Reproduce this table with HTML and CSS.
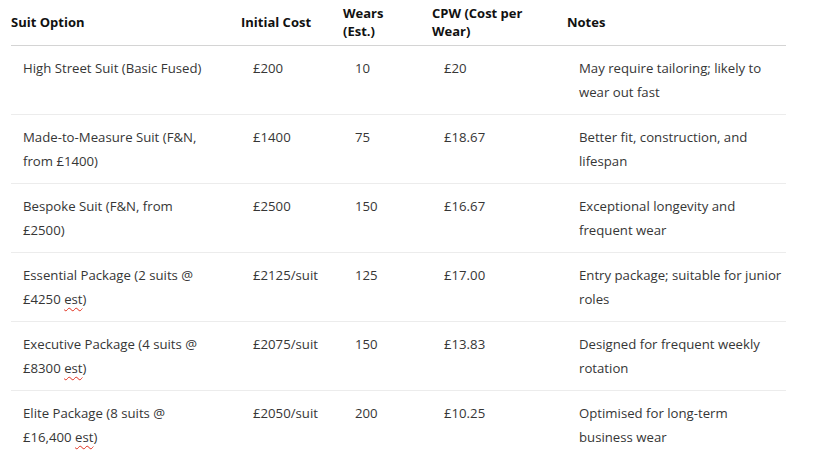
FILE: index.html
```html
<!DOCTYPE html>
<html>
<head>
<meta charset="utf-8">
<link rel="stylesheet" href="styles.css">
</head>
<body>
<table class="suits">
  <colgroup>
    <col class="c1"><col class="c2"><col class="c3"><col class="c4"><col class="c5">
  </colgroup>
  <thead>
    <tr>
      <th>Suit Option</th>
      <th>Initial Cost</th>
      <th>Wears<br>(Est.)</th>
      <th>CPW (Cost per<br>Wear)</th>
      <th>Notes</th>
    </tr>
  </thead>
  <tbody>
    <tr>
      <td>High Street Suit (Basic Fused)</td>
      <td>£200</td>
      <td>10</td>
      <td>£20</td>
      <td>May require tailoring; likely to<br>wear out fast</td>
    </tr>
    <tr>
      <td>Made-to-Measure Suit (F&amp;N,<br>from £1400)</td>
      <td>£1400</td>
      <td>75</td>
      <td>£18.67</td>
      <td>Better fit, construction, and<br>lifespan</td>
    </tr>
    <tr>
      <td>Bespoke Suit (F&amp;N, from<br>£2500)</td>
      <td>£2500</td>
      <td>150</td>
      <td>£16.67</td>
      <td>Exceptional longevity and<br>frequent wear</td>
    </tr>
    <tr>
      <td>Essential Package (2 suits @<br>£4250 <span class="spell">est</span>)</td>
      <td>£2125/suit</td>
      <td>125</td>
      <td>£17.00</td>
      <td>Entry package; suitable for junior<br>roles</td>
    </tr>
    <tr>
      <td>Executive Package (4 suits @<br>£8300 <span class="spell">est</span>)</td>
      <td>£2075/suit</td>
      <td>150</td>
      <td>£13.83</td>
      <td>Designed for frequent weekly<br>rotation</td>
    </tr>
    <tr>
      <td>Elite Package (8 suits @<br>£16,400 <span class="spell">est</span>)</td>
      <td>£2050/suit</td>
      <td>200</td>
      <td>£10.25</td>
      <td>Optimised for long-term<br>business wear</td>
    </tr>
  </tbody>
</table>
</body>
</html>
```
FILE: styles.css
```css
html, body {
  margin: 0;
  padding: 0;
  background: #ffffff;
}
body {
  font-family: "Open Sans", "Noto Sans", "Liberation Sans", sans-serif;
  font-size: 13.2px;
  color: #363636;
}
.suits {
  margin-left: 11px;
  border-collapse: collapse;
  table-layout: fixed;
  width: 775px;
}
.c1 { width: 230px; }
.c2 { width: 102px; }
.c3 { width: 89px; }
.c4 { width: 135px; }
.c5 { width: 219px; }
.suits th {
  text-align: left;
  font-size: 13px;
  font-weight: 700;
  color: #111111;
  line-height: 18px;
  height: 44px;
  padding: 0 0 1px 0;
  vertical-align: middle;
  border-bottom: 1px solid #d4d4d4;
  white-space: nowrap;
}
.suits td {
  padding: 10px 0 10px 12px;
  line-height: 24px;
  height: 48px;
  vertical-align: top;
  white-space: nowrap;
  border-bottom: 1px solid #ececec;
}
.suits tbody tr:last-child td {
  border-bottom: none;
}
.spell {
  text-decoration: underline wavy #e0301e;
  text-decoration-thickness: 1px;
  text-underline-offset: 3px;
}
```
